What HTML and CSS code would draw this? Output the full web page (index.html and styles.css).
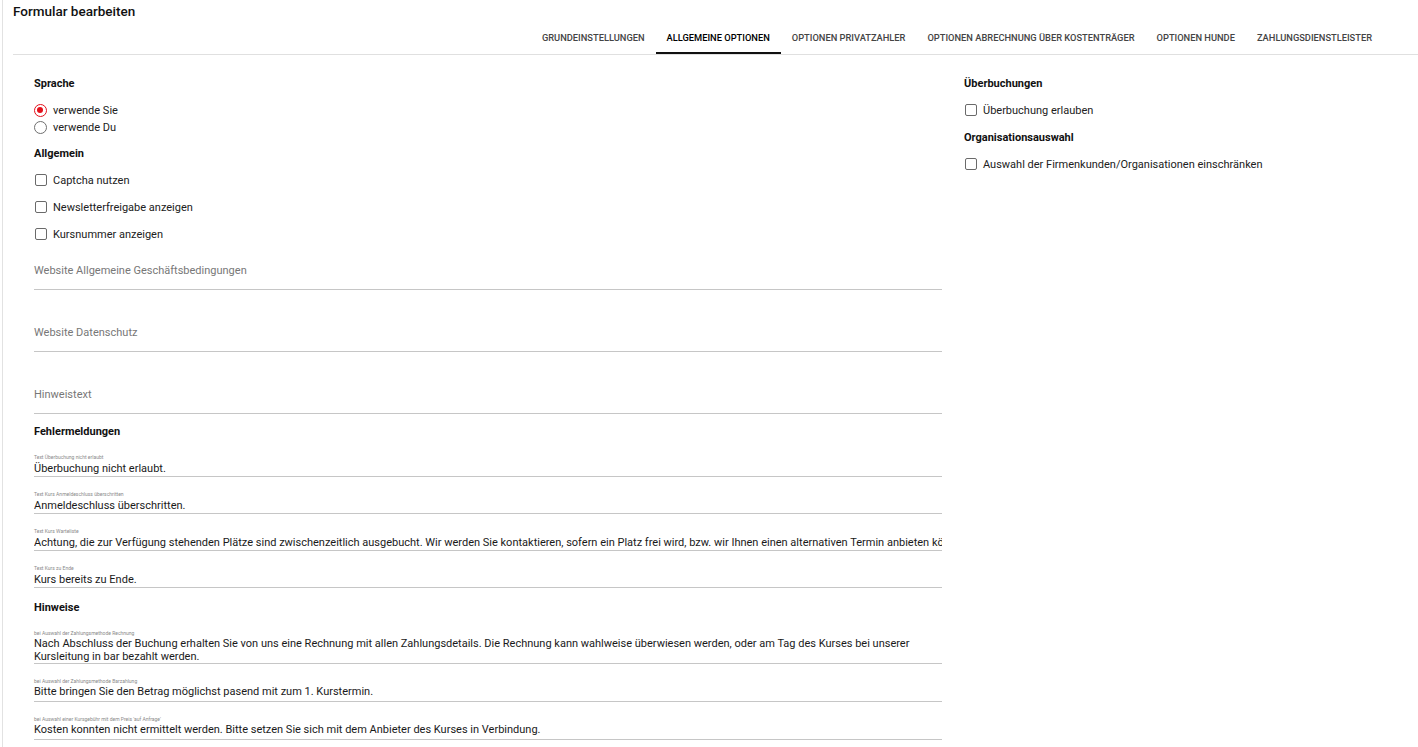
FILE: index.html
```html
<!DOCTYPE html>
<html lang="de">
<head>
<meta charset="utf-8">
<title>Formular bearbeiten</title>
<link rel="stylesheet" href="styles.css">
</head>
<body>
<div class="card">
  <h1 class="title">Formular bearbeiten</h1>
  <nav class="tabs">
    <div class="tab">Grundeinstellungen</div>
    <div class="tab active">Allgemeine Optionen</div>
    <div class="tab">Optionen Privatzahler</div>
    <div class="tab">Optionen Abrechnung über Kostenträger</div>
    <div class="tab">Optionen Hunde</div>
    <div class="tab">Zahlungsdienstleister</div>
  </nav>
  <div class="content">
    <div class="col">
      <h2 class="heading">Sprache</h2>
      <div class="radios">
        <label class="radio-row"><span class="radio checked"></span>verwende Sie</label>
        <label class="radio-row"><span class="radio"></span>verwende Du</label>
      </div>
      <h2 class="heading">Allgemein</h2>
      <label class="check-row"><span class="box"></span>Captcha nutzen</label>
      <label class="check-row"><span class="box"></span>Newsletterfreigabe anzeigen</label>
      <label class="check-row"><span class="box"></span>Kursnummer anzeigen</label>

      <div class="textfield">Website Allgemeine Geschäftsbedingungen</div>
      <div class="textfield">Website Datenschutz</div>
      <div class="textfield">Hinweistext</div>

      <h2 class="heading">Fehlermeldungen</h2>
      <div class="field">
        <div class="flabel">Text Überbuchung nicht erlaubt</div>
        <div class="fvalue">Überbuchung nicht erlaubt.</div>
      </div>
      <div class="field">
        <div class="flabel">Text Kurs Anmeldeschluss überschritten</div>
        <div class="fvalue">Anmeldeschluss überschritten.</div>
      </div>
      <div class="field">
        <div class="flabel">Text Kurs Warteliste</div>
        <div class="fvalue">Achtung, die zur Verfügung stehenden Plätze sind zwischenzeitlich ausgebucht. Wir werden Sie kontaktieren, sofern ein Platz frei wird, bzw. wir Ihnen einen alternativen Termin anbieten können.</div>
      </div>
      <div class="field">
        <div class="flabel">Text Kurs zu Ende</div>
        <div class="fvalue">Kurs bereits zu Ende.</div>
      </div>

      <h2 class="heading">Hinweise</h2>
      <div class="field">
        <div class="flabel">bei Auswahl der Zahlungsmethode Rechnung</div>
        <div class="tvalue">Nach Abschluss der Buchung erhalten Sie von uns eine Rechnung mit allen Zahlungsdetails. Die Rechnung kann wahlweise überwiesen werden, oder am Tag des Kurses bei unserer Kursleitung in bar bezahlt werden.</div>
      </div>
      <div class="field">
        <div class="flabel">bei Auswahl der Zahlungsmethode Barzahlung</div>
        <div class="tvalue single">Bitte bringen Sie den Betrag möglichst pasend mit zum 1. Kurstermin.</div>
      </div>
      <div class="field">
        <div class="flabel">bei Auswahl einer Kursgebühr mit dem Preis 'auf Anfrage'</div>
        <div class="tvalue single">Kosten konnten nicht ermittelt werden. Bitte setzen Sie sich mit dem Anbieter des Kurses in Verbindung.</div>
      </div>
    </div>
    <div class="col">
      <h2 class="heading">Überbuchungen</h2>
      <label class="check-row"><span class="box"></span>Überbuchung erlauben</label>
      <h2 class="heading">Organisationsauswahl</h2>
      <label class="check-row"><span class="box"></span>Auswahl der Firmenkunden/Organisationen einschränken</label>
    </div>
  </div>
</div>
</body>
</html>
```

FILE: styles.css
```css
html, body {
  margin: 0;
  padding: 0;
  background: #fff;
}
body {
  font-family: Roboto, "Liberation Sans", Arial, sans-serif;
  color: #212121;
  font-size: 11px;
}
.card {
  margin-left: 2px;
  padding-left: 10px;
  border-left: 1px solid #e2e2e2;
  min-height: 747px;
  box-sizing: border-box;
}
.title {
  margin: 0;
  font-size: 13.5px;
  font-weight: 500;
  line-height: 22px;
  color: #111;
}
.tabs {
  display: flex;
  justify-content: flex-end;
  padding-right: 35px;
  border-bottom: 1px solid #e0e0e0;
}
.tab {
  box-sizing: border-box;
  height: 32px;
  line-height: 32px;
  padding: 0 11px;
  font-size: 9.3px;
  font-weight: 500;
  text-transform: uppercase;
  color: #444;
  border-bottom: 2px solid transparent;
}
.tab.active {
  color: #000;
  border-bottom-color: #111;
}
.content {
  display: grid;
  grid-template-columns: 908px 1fr;
  column-gap: 22px;
  padding-left: 21px;
  padding-top: 21px;
}
.col {
  display: flex;
  flex-direction: column;
}
.heading {
  margin: 10px 0 0;
  font-size: 11px;
  font-weight: 700;
  line-height: 16px;
  color: #111;
}
.col > .heading:first-child {
  margin-top: 0;
}
.check-row + .heading {
  margin-top: 11px;
}
.field + .heading {
  margin-top: 12px;
}
.radios {
  margin-top: 10px;
  display: flex;
  flex-direction: column;
}
.radio-row {
  display: flex;
  align-items: center;
  height: 17px;
  line-height: 17px;
}
.radio {
  width: 13px;
  height: 13px;
  box-sizing: border-box;
  border: 1.5px solid #6f6f6f;
  border-radius: 50%;
  margin-right: 6px;
  position: relative;
}
.radio.checked {
  border-color: #e3101b;
}
.radio.checked::after {
  content: "";
  position: absolute;
  left: 2px;
  top: 2px;
  width: 6px;
  height: 6px;
  border-radius: 50%;
  background: #e3101b;
}
.check-row {
  display: flex;
  align-items: center;
  height: 18px;
  margin-top: 9px;
}
.heading + .check-row {
  margin-top: 9px;
}
.box {
  width: 12px;
  height: 12px;
  box-sizing: border-box;
  border: 1.5px solid #6a6a6a;
  border-radius: 2px;
  margin-left: 1px;
  margin-right: 6px;
}
.textfield {
  margin-top: 33px;
  line-height: 20px;
  padding-bottom: 8px;
  border-bottom: 1px solid #c6c6c6;
  color: #777;
}
.check-row + .textfield {
  margin-top: 18px;
}
.field {
  margin-top: 13px;
  border-bottom: 1px solid #c6c6c6;
}
.heading + .field {
  margin-top: 13px;
}
.flabel {
  font-size: 5px;
  line-height: 8px;
  color: #8a8a8a;
  white-space: nowrap;
}
.fvalue {
  line-height: 15px;
  white-space: nowrap;
  overflow: hidden;
  color: #1a1a1a;
}
.tvalue {
  line-height: 13px;
  color: #1a1a1a;
}
.tvalue.single {
  padding-bottom: 3px;
}
```
